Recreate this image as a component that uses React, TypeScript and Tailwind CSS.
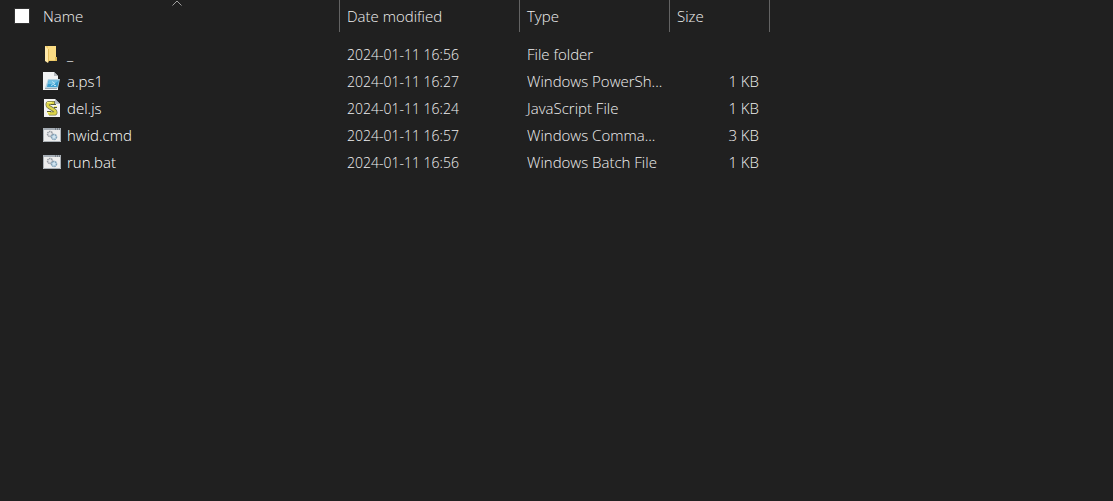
import type { ReactNode } from 'react';

type IconName = 'folder' | 'powershell' | 'script' | 'batch';

interface FileEntry {
  name: string;
  modified: string;
  type: string;
  size: string;
  icon: IconName;
}

const files: FileEntry[] = [
  { name: '_', modified: '2024-01-11 16:56', type: 'File folder', size: '', icon: 'folder' },
  { name: 'a.ps1', modified: '2024-01-11 16:27', type: 'Windows PowerSh...', size: '1 KB', icon: 'powershell' },
  { name: 'del.js', modified: '2024-01-11 16:24', type: 'JavaScript File', size: '1 KB', icon: 'script' },
  { name: 'hwid.cmd', modified: '2024-01-11 16:57', type: 'Windows Comma...', size: '3 KB', icon: 'batch' },
  { name: 'run.bat', modified: '2024-01-11 16:56', type: 'Windows Batch File', size: '1 KB', icon: 'batch' },
];

function FolderIcon() {
  return (
    <>
      <path d="M2 1h11v11h1v4H2z" fill="#f0cd6c" />
      <path d="M5 1h8v14H5z" fill="#fbdc84" />
      <path d="M2 1l3 3v14l-3-2z" fill="#ffe9a9" />
      <path d="M5 4v14l1-2V4z" fill="#e3bd5d" />
      <path d="M12 12h2v4h-2z" fill="#e3bd58" />
    </>
  );
}

function PowerShellIcon() {
  return (
    <>
      <path d="M0 0h11l4 4v14H0z" fill="#f1f3f4" />
      <path d="M11 0l4 4h-4z" fill="#b4babf" />
      <path d="M5 7h12l-2 9H2z" fill="#b4d3e2" />
      <path d="M5.500 8.500H16L14.500 15H4z" fill="#3c9fd0" />
      <path d="M5.500 8.500H16L11 12H5z" fill="#6fc0e3" />
      <path d="M9 9.500l3 2-4 2M11 13.500h2" fill="none" stroke="#b9e3f5" strokeWidth="1" />
      <path d="M2 16.500h12" stroke="#9aa9b2" />
    </>
  );
}

function ScriptIcon() {
  return (
    <>
      <path d="M1 0h11l5 5v13H1z" fill="#f4f4f4" />
      <path d="M12 0l5 5h-5z" fill="#b9bfc4" />
      <path
        d="M12 4H6C4 4 4 7 6 8l5 3c2 1 2 3.500 0 3.500H6"
        fill="none"
        stroke="#77784c"
        strokeWidth="4"
      />
      <path
        d="M11 4H6C4 4 4 7 6 8l5 3c2 1 2 3.500 0 3.500H5"
        fill="none"
        stroke="#ddd548"
        strokeWidth="2.500"
      />
      <path d="M8 5.500h5M11 8.500h3M4 12.500h4" stroke="#55593a" />
      <path d="M4 3.500h5M11 7.500h3M4 13.500h3" stroke="#f7f27a" />
    </>
  );
}

function BatchIcon() {
  return (
    <>
      <path d="M0 2h18v14H0z" fill="#ededed" />
      <path d="M0 2h18v2H0z" fill="#a5adb5" />
      <path d="M12 3h1M14 3h1M16 3h1" stroke="#4c555d" />
      <path d="M.500 2v13.500h17V2" fill="none" stroke="#aab0b5" />
      <circle cx="7" cy="8" r="2.500" fill="#e2e4e7" stroke="#969ba2" strokeWidth="1.500" strokeDasharray="1.500 .600" />
      <circle cx="11" cy="11" r="2.500" fill="#d0e4f0" stroke="#7e9fb6" strokeWidth="1.500" strokeDasharray="1.500 .600" />
    </>
  );
}

const icons: Record<IconName, ReactNode> = {
  folder: <FolderIcon />,
  powershell: <PowerShellIcon />,
  script: <ScriptIcon />,
  batch: <BatchIcon />,
};

function HeaderCell({ label, width }: { label: string; width: string }) {
  return (
    <th className={`${width} p-0 pb-2 font-light`}>
      <button type="button" className="block h-8 w-full border-r border-[#636363] pl-[7px] text-left">
        {label}
      </button>
    </th>
  );
}

export default function App() {
  return (
    <main className="min-h-screen overflow-x-auto bg-[#202020] pl-3.5 font-['Open_Sans','Noto_Sans',sans-serif] text-[15px] leading-5 font-light text-[#f0f0f0]">
      <table className="w-[756px] table-fixed border-collapse">
        <thead>
          <tr>
            <th className="w-[326px] p-0 pb-2 font-light" aria-sort="ascending">
              <div className="relative flex h-8 items-center border-r border-[#636363]">
                <input
                  type="checkbox"
                  aria-label="Select all files"
                  className="size-4 shrink-0 appearance-none border border-[#333333] bg-white"
                />
                <button type="button" className="h-8 flex-1 pl-[13px] text-left">
                  Name
                </button>
                <svg
                  viewBox="0 0 10 6"
                  className="pointer-events-none absolute top-0 left-1/2 h-1.5 w-2.5 -translate-x-1/2"
                  fill="none"
                  stroke="#a0a0a0"
                  aria-hidden="true"
                >
                  <path d="M.500 5.500L5 1l4.500 4.500" />
                </svg>
              </div>
            </th>
            <HeaderCell label="Date modified" width="w-[180px]" />
            <HeaderCell label="Type" width="w-[150px]" />
            <HeaderCell label="Size" width="w-[100px]" />
          </tr>
        </thead>
        <tbody>
          {files.map((file) => (
            <tr key={file.name} className="h-[27px]">
              <td className="p-0 pl-[29px] text-white">
                <div className="flex items-center gap-1.5">
                  <svg viewBox="0 0 18 18" className="size-[18px] shrink-0" aria-hidden="true">
                    {icons[file.icon]}
                  </svg>
                  <span>{file.name}</span>
                </div>
              </td>
              <td className="p-0 pt-0.5 pl-[7px] text-sm">{file.modified}</td>
              <td className="p-0 pl-[7px] whitespace-nowrap">{file.type}</td>
              <td className="p-0 pr-[11px] text-right">{file.size}</td>
            </tr>
          ))}
        </tbody>
      </table>
    </main>
  );
}
